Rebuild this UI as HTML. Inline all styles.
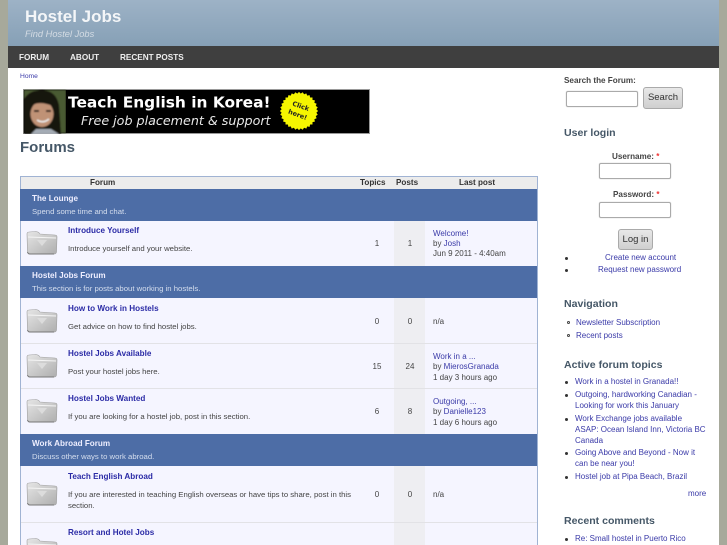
<!DOCTYPE html>
<html><head><meta charset="utf-8"><style>
html,body{margin:0;padding:0;width:727px;height:545px;overflow:hidden;background:#a7a99b;font-family:"Liberation Sans",sans-serif;color:#444;font-size:8px}
#w{position:absolute;left:0;top:0;width:727px;height:545px;overflow:hidden;filter:blur(.35px)}
div,a{position:absolute;white-space:nowrap}
.t{position:absolute;white-space:nowrap;line-height:10px;margin-top:2px}
.l{color:#3a3aa8}
.b{font-weight:bold;font-size:8.15px}
.m{font-size:7.75px}
.sec{left:21px;width:516px;background:#4d6da6}
.row{left:21px;width:516px;background:#f5f5ff}
.t.h2{font-weight:bold;color:#455767;font-size:10.55px;line-height:13px;margin-top:4px}
.inp{background:#fff;border:1px solid #aaa;border-radius:2px;box-shadow:0 0 1px #bbb;box-sizing:border-box}
.btn{background:linear-gradient(#e8e8e8,#cfcfcf);border:1px solid #aaa;border-radius:3px;box-sizing:border-box;color:#333;font-size:9.5px;text-align:center}
.bul{width:3px;height:3px;border-radius:50%;background:#333}
.bulo{border-radius:50%;border:1px solid #444;box-sizing:content-box;width:1px;height:1px}
.c{text-align:center;width:30px}
.t.n{margin-top:1px;color:#eee;font-size:8.2px}
</style></head><body><div id="w">
<svg width="0" height="0" style="position:absolute"><defs>
<linearGradient id="fg" x1="0" y1="0" x2="1" y2="1"><stop offset="0" stop-color="#e6e6e6"/><stop offset="1" stop-color="#aeaeae"/></linearGradient>
<symbol id="folder" viewBox="0 0 32 25"><path d="M1 4Q1 2 3 2L10 1.500Q13 2 14 4L29 5Q31 5 31 7L30.500 22Q30 24 28 24L4 24Q2 24 1.500 22Z" fill="url(#fg)" stroke="#a0a0a0" stroke-width=".6"/><path d="M2 7L30 8" stroke="#f5f5f5" stroke-width="1"/><path d="M11 10L21 10L16 16Z" fill="#dcdcdc"/><path d="M1.500 22Q2 24 4 24L28 24" stroke="#777" stroke-width="1" fill="none"/></symbol>
<filter id="bl"><feGaussianBlur stdDeviation=".8"/></filter>
</defs></svg>
<div style="left:8px;top:0;width:711px;height:46px;background:linear-gradient(#9db2c6,#86a0b6)"></div>
<div class="t b" style="left:25px;top:6px;font-size:17px;line-height:18px;color:#f4f6f8">Hostel Jobs</div>
<div class="t" style="left:25px;top:27px;font-size:9.3px;line-height:11px;font-style:italic;color:#d4dce4">Find Hostel Jobs</div>
<div style="left:8px;top:46px;width:711px;height:22px;background:#3f3f3f"></div>
<div class="t b n" style="left:19px;top:52px">FORUM</div>
<div class="t b n" style="left:70px;top:52px">ABOUT</div>
<div class="t b n" style="left:120px;top:52px">RECENT POSTS</div>
<div style="left:8px;top:68px;width:711px;height:477px;background:#fff"></div>
<div class="t l" style="left:20px;top:70px;font-size:6.7px">Home</div>

<svg style="position:absolute;left:23px;top:89px" width="347" height="45" viewBox="0 0 347 45">
<rect width="347" height="45" fill="#999"/><rect x="1" y="1" width="345" height="43" fill="#000"/>
<g filter="url(#bl)">
<rect x="1" y="1" width="42" height="43" fill="#4a5a30"/>
<path d="M1 45V10Q6 1 20 1Q33 2 36 16L38 45Z" fill="#18120f"/>
<ellipse cx="19" cy="25" rx="11.500" ry="13" fill="#c09276"/>
<path d="M6 20Q12 10 30 17L30 7L10 5Z" fill="#18120f"/>
<path d="M14 31Q20 35 26 30" stroke="#eee" stroke-width="1.500" fill="none"/>
<rect x="11" y="21" width="5" height="2" fill="#2a1a14"/><rect x="23" y="21" width="5" height="2" fill="#2a1a14"/>
<path d="M8 45L13 40H28L36 45Z" fill="#a4acb5"/>
</g>
<rect x="43" y="1" width="1" height="43" fill="#000"/>
<text x="45" y="18.500" font-family="'DejaVu Sans',sans-serif" font-weight="bold" font-size="15.400" fill="#fff">Teach English in Korea!</text>
<text x="58" y="36" font-family="'DejaVu Sans',sans-serif" font-style="italic" font-size="12.700" fill="#e8e8e8">Free job placement &amp; support</text>
<g fill="#f6f600" transform="translate(276,22)"><circle r="17"/><rect x="-13.500" y="-13.500" width="27" height="27"/><rect x="-13.500" y="-13.500" width="27" height="27" transform="rotate(11.250)"/><rect x="-13.500" y="-13.500" width="27" height="27" transform="rotate(22.500)"/><rect x="-13.500" y="-13.500" width="27" height="27" transform="rotate(33.750)"/><rect x="-13.500" y="-13.500" width="27" height="27" transform="rotate(45)"/><rect x="-13.500" y="-13.500" width="27" height="27" transform="rotate(56.250)"/><rect x="-13.500" y="-13.500" width="27" height="27" transform="rotate(67.500)"/><rect x="-13.500" y="-13.500" width="27" height="27" transform="rotate(78.750)"/></g>
<g transform="translate(276,22) rotate(20)" font-family="'DejaVu Sans',sans-serif" font-weight="bold" font-size="6.500" fill="#222" text-anchor="middle"><text y="-3">Click</text><text y="6">here!</text></g>
</svg>

<div class="t b" style="left:20px;top:137px;font-size:15px;line-height:18px;color:#455767">Forums</div>

<div style="left:20px;top:176px;width:518px;height:369px;background:#a0b3d3"></div>
<div style="left:21px;top:177px;width:516px;height:12px;background:#ececec"></div>
<div class="t b" style="left:90px;top:176px;color:#333">Forum</div>
<div class="t b" style="left:360px;top:176px;color:#333">Topics</div>
<div class="t b" style="left:396px;top:176px;color:#333">Posts</div>
<div class="t b" style="left:459px;top:176px;color:#333">Last post</div>

<div class="sec" style="top:189px;height:32px;left:20px;width:517px"></div>
<div class="t b" style="left:32px;top:192px;color:#eef">The Lounge</div>
<div class="t m" style="left:32px;top:205px;color:#d5deee">Spend some time and chat.</div>

<div class="row" style="top:221px;height:45px"></div>
<div style="left:394px;top:221px;width:31px;height:45px;background:#eeeef2"></div>
<svg style="position:absolute;left:26px;top:230px" width="32" height="25"><use href="#folder"/></svg>
<div class="t b" style="left:68px;top:224px;color:#2b2ba6">Introduce Yourself</div>
<div class="t m" style="left:68px;top:242px">Introduce yourself and your website.</div>
<div class="t c" style="left:362px;top:237px">1</div><div class="t c" style="left:395px;top:237px">1</div>
<div class="t l" style="left:433px;top:227px">Welcome!</div>
<div class="t" style="left:433px;top:237px">by <span class="l">Josh</span></div>
<div class="t" style="left:433px;top:247px">Jun 9 2011 - 4:40am</div>

<div class="sec" style="top:266px;height:32px;left:20px;width:517px"></div>
<div class="t b" style="left:32px;top:269px;color:#eef">Hostel Jobs Forum</div>
<div class="t m" style="left:32px;top:282px;color:#d5deee">This section is for posts about working in hostels.</div>

<div class="row" style="top:298px;height:45px"></div>
<div style="left:394px;top:298px;width:31px;height:136px;background:#eeeef2"></div>
<div style="left:21px;top:343px;width:516px;height:1px;background:#e2e2e6"></div>
<div style="left:21px;top:344px;width:516px;height:45px;background:#f5f5ff"></div>
<div style="left:394px;top:344px;width:31px;height:45px;background:#eeeef2"></div>
<div style="left:21px;top:389px;width:516px;height:45px;background:#f5f5ff"></div>
<div style="left:21px;top:388px;width:516px;height:1px;background:#e2e2e6"></div>
<div style="left:394px;top:389px;width:31px;height:45px;background:#eeeef2"></div>
<svg style="position:absolute;left:26px;top:308px" width="32" height="25"><use href="#folder"/></svg>
<svg style="position:absolute;left:26px;top:353px" width="32" height="25"><use href="#folder"/></svg>
<svg style="position:absolute;left:26px;top:398px" width="32" height="25"><use href="#folder"/></svg>
<div class="t b" style="left:68px;top:302px;color:#2b2ba6">How to Work in Hostels</div>
<div class="t m" style="left:68px;top:320px">Get advice on how to find hostel jobs.</div>
<div class="t c" style="left:362px;top:315px">0</div><div class="t c" style="left:395px;top:315px">0</div>
<div class="t" style="left:433px;top:315px">n/a</div>
<div class="t b" style="left:68px;top:347px;color:#2b2ba6">Hostel Jobs Available</div>
<div class="t m" style="left:68px;top:365px">Post your hostel jobs here.</div>
<div class="t c" style="left:362px;top:360px">15</div><div class="t c" style="left:395px;top:360px">24</div>
<div class="t l" style="left:433px;top:350px">Work in a ...</div>
<div class="t" style="left:433px;top:360px">by <span class="l">MierosGranada</span></div>
<div class="t" style="left:433px;top:371px">1 day 3 hours ago</div>
<div class="t b" style="left:68px;top:392px;color:#2b2ba6">Hostel Jobs Wanted</div>
<div class="t m" style="left:68px;top:410px">If you are looking for a hostel job, post in this section.</div>
<div class="t c" style="left:362px;top:405px">6</div><div class="t c" style="left:395px;top:405px">8</div>
<div class="t l" style="left:433px;top:395px">Outgoing, ...</div>
<div class="t" style="left:433px;top:405px">by <span class="l">Danielle123</span></div>
<div class="t" style="left:433px;top:416px">1 day 6 hours ago</div>

<div class="sec" style="top:434px;height:32px;left:20px;width:517px"></div>
<div class="t b" style="left:32px;top:437px;color:#eef">Work Abroad Forum</div>
<div class="t m" style="left:32px;top:450px;color:#d5deee">Discuss other ways to work abroad.</div>

<div class="row" style="top:466px;height:56px"></div>
<div style="left:394px;top:466px;width:31px;height:79px;background:#eeeef2"></div>
<svg style="position:absolute;left:26px;top:481px" width="32" height="25"><use href="#folder"/></svg>
<div class="t b" style="left:68px;top:470px;color:#2b2ba6">Teach English Abroad</div>
<div class="t m" style="left:68px;top:488px">If you are interested in teaching English overseas or have tips to share, post in this</div>
<div class="t m" style="left:68px;top:499px">section.</div>
<div class="t c" style="left:362px;top:488px">0</div><div class="t c" style="left:395px;top:488px">0</div>
<div class="t" style="left:433px;top:488px">n/a</div>
<div style="left:21px;top:522px;width:516px;height:1px;background:#e2e2e6"></div>
<div style="left:21px;top:523px;width:373px;height:22px;background:#f5f5ff"></div>
<div style="left:425px;top:523px;width:112px;height:22px;background:#f5f5ff"></div>
<svg style="position:absolute;left:26px;top:537px" width="32" height="25"><use href="#folder"/></svg>
<div class="t b" style="left:68px;top:526px;color:#2b2ba6">Resort and Hotel Jobs</div>

<div class="t b" style="left:564px;top:74px;color:#444">Search the Forum:</div>
<div class="inp" style="left:566px;top:91px;width:72px;height:16px"></div>
<div class="btn" style="left:643px;top:87px;width:40px;height:22px;line-height:20px">Search</div>
<div class="t h2" style="left:564px;top:123px">User login</div>
<div class="t b" style="left:612px;top:150px;color:#444">Username: <span style="color:#e33">*</span></div>
<div class="inp" style="left:599px;top:163px;width:72px;height:16px"></div>
<div class="t b" style="left:613px;top:188px;color:#444">Password: <span style="color:#e33">*</span></div>
<div class="inp" style="left:599px;top:202px;width:72px;height:16px"></div>
<div class="btn" style="left:618px;top:229px;width:35px;height:21px;line-height:19px">Log in</div>
<div class="bul" style="left:565px;top:257px"></div>
<div class="t l" style="left:605px;top:251px">Create new account</div>
<div class="bul" style="left:565px;top:269px"></div>
<div class="t l" style="left:598px;top:263px">Request new password</div>

<div class="t h2" style="left:564px;top:294px">Navigation</div>
<div class="bulo" style="left:567px;top:321px"></div>
<div class="t l" style="left:576px;top:316px">Newsletter Subscription</div>
<div class="bulo" style="left:567px;top:334px"></div>
<div class="t l" style="left:576px;top:329px">Recent posts</div>

<div class="t h2" style="left:564px;top:355px">Active forum topics</div>
<div class="bul" style="left:565px;top:381px"></div><div class="t l" style="left:575px;top:375px">Work in a hostel in Granada!!</div>
<div class="bul" style="left:565px;top:394px"></div><div class="t l" style="left:575px;top:388px">Outgoing, hardworking Canadian -</div>
<div class="t l" style="left:575px;top:399px">Looking for work this January</div>
<div class="bul" style="left:565px;top:418px"></div><div class="t l" style="left:575px;top:412px">Work Exchange jobs available</div>
<div class="t l" style="left:575px;top:423px">ASAP: Ocean Island Inn, Victoria BC</div>
<div class="t l" style="left:575px;top:434px">Canada</div>
<div class="bul" style="left:565px;top:452px"></div><div class="t l" style="left:575px;top:446px">Going Above and Beyond - Now it</div>
<div class="t l" style="left:575px;top:457px">can be near you!</div>
<div class="bul" style="left:565px;top:476px"></div><div class="t l" style="left:575px;top:470px">Hostel job at Pipa Beach, Brazil</div>
<div class="t l" style="left:688px;top:487px">more</div>
<div class="t h2" style="left:564px;top:511px">Recent comments</div>
<div class="bul" style="left:565px;top:538px"></div><div class="t l" style="left:575px;top:532px">Re: Small hostel in Puerto Rico</div>
</div></body></html>
